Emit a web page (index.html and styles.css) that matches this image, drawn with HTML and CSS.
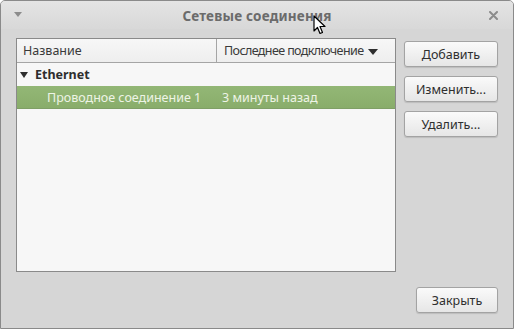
FILE: index.html
```html
<!DOCTYPE html>
<html lang="ru">
<head>
  <meta charset="UTF-8">
  <title>Сетевые соединения</title>
  <link rel="stylesheet" href="styles.css">
</head>
<body>
  <div class="window">
    <div class="titlebar">
      <span class="menu-arrow"></span>
      <span class="title">Сетевые соединения</span>
      <svg class="close" width="9" height="9" viewBox="0 0 9 9">
        <path d="M1 1 L8 8 M8 1 L1 8" stroke="#8c8c8c" stroke-width="2" stroke-linecap="round"/>
      </svg>
      <svg class="cursor" width="14" height="21" viewBox="0 0 14 21">
        <path d="M1 1 L1 16 L4.5 12.5 L7 18.5 L9.5 17.5 L7 11.5 L12 11.5 Z" fill="#fff" stroke="#000" stroke-width="1.2" stroke-linejoin="round"/>
      </svg>
    </div>

    <div class="content">
      <div class="main">
        <div class="list">
          <div class="list-head">
            <div class="col col-name">Название</div>
            <div class="col col-last">Последнее подключение <span class="sort"></span></div>
          </div>
          <div class="group"><span class="expander"></span>Ethernet</div>
          <div class="row selected">
            <div class="cell cell-name">Проводное соединение 1</div>
            <div class="cell">3 минуты назад</div>
          </div>
        </div>

        <div class="actions">
          <button class="btn">Добавить</button>
          <button class="btn">Изменить...</button>
          <button class="btn">Удалить...</button>
        </div>
      </div>

      <div class="footer">
        <button class="btn btn-close">Закрыть</button>
      </div>
    </div>
  </div>
</body>
</html>
```

FILE: styles.css
```css
html, body {
  margin: 0;
  padding: 0;
  background: #fff;
}
body {
  font-family: "Noto Sans", "Open Sans", sans-serif;
  font-size: 12.5px;
  color: #3c3c3c;
}
.window {
  width: 514px;
  height: 329px;
  box-sizing: border-box;
  border: 1px solid #8a8a8a;
  border-radius: 5px 5px 0 0;
  background: #d6d6d6;
  display: flex;
  flex-direction: column;
  overflow: hidden;
}
.titlebar {
  position: relative;
  height: 28px;
  flex: none;
  display: flex;
  align-items: center;
  justify-content: center;
  background: linear-gradient(#e4e4e4, #d8d8d8);
}
.title {
  font-weight: bold;
  font-size: 13.5px;
  letter-spacing: 0.2px;
  color: #6b6b6b;
  margin-top: 1px;
}
.menu-arrow {
  position: absolute;
  left: 13px;
  top: 11px;
  width: 0;
  height: 0;
  border-left: 4px solid transparent;
  border-right: 4px solid transparent;
  border-top: 5px solid #8c8c8c;
}
.close {
  position: absolute;
  right: 15px;
  top: 10px;
}
.cursor {
  position: absolute;
  left: 312px;
  top: 14px;
}

.content {
  flex: 1;
  display: flex;
  flex-direction: column;
  padding: 9px 15px 0 15px;
}
.main {
  display: flex;
  gap: 8px;
}
.list {
  width: 380px;
  height: 234px;
  box-sizing: border-box;
  border: 1px solid #8a8a8a;
  background: #f7f7f7;
}
.list-head {
  display: flex;
  height: 24px;
  box-sizing: border-box;
  border-bottom: 1px solid #a5a5a5;
  background: linear-gradient(#f7f7f7, #eeeeee);
}
.col {
  display: flex;
  align-items: center;
  padding-left: 6px;
  color: #3a3a3a;
}
.col-name {
  width: 193px;
  border-right: 1px solid #a5a5a5;
}
.col-last {
  flex: 1;
  padding-left: 7px;
  letter-spacing: -0.6px;
}
.sort {
  margin-left: 5px;
  margin-top: 2px;
  width: 0;
  height: 0;
  border-left: 5px solid transparent;
  border-right: 5px solid transparent;
  border-top: 6px solid #2e2e2e;
}
.group {
  height: 23px;
  display: flex;
  align-items: center;
  padding-left: 3px;
  font-weight: bold;
  color: #2e2e2e;
}
.expander {
  width: 0;
  height: 0;
  margin-right: 7px;
  margin-top: 1px;
  border-left: 4px solid transparent;
  border-right: 4px solid transparent;
  border-top: 6px solid #2e2e2e;
}
.row {
  display: flex;
  height: 23px;
  align-items: center;
}
.row.selected {
  background: linear-gradient(#93b776, #89ad6b);
  color: #eef4e6;
  border-bottom: 1px solid #7f9f66;
  box-sizing: border-box;
}
.cell-name {
  width: 175px;
  padding-left: 30px;
}

.actions {
  display: flex;
  flex-direction: column;
  gap: 9px;
  padding-top: 3px;
}
.btn {
  font-family: inherit;
  font-size: 12.5px;
  color: #2f2f2f;
  height: 26px;
  width: 94px;
  border: 1px solid #a3a3a3;
  border-radius: 3px;
  background: linear-gradient(#fafafa, #e6e6e6);
  box-shadow: 0 1px 1px rgba(0, 0, 0, 0.12);
  padding: 0;
}
.footer {
  display: flex;
  justify-content: flex-end;
  padding-top: 15px;
}
.btn-close {
  width: 82px;
}
```
